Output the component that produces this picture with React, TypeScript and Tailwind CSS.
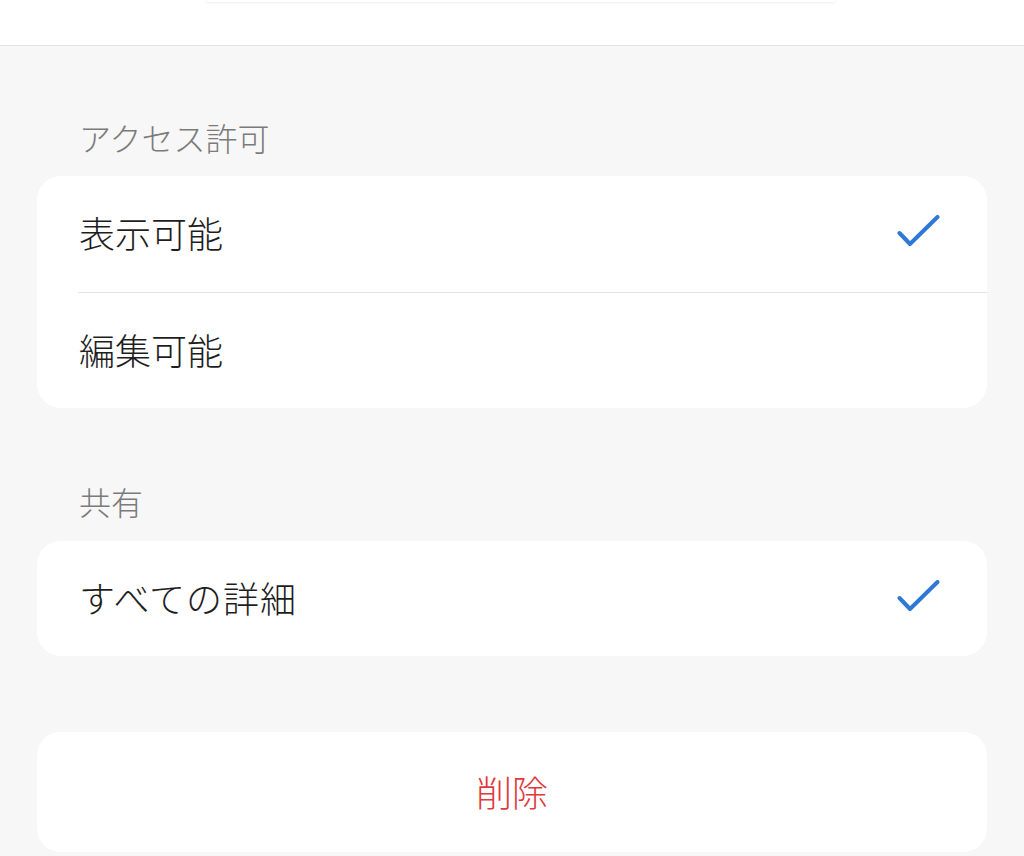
import React from "react";

const font = { fontFamily: '"Noto Sans CJK JP", "Noto Sans", sans-serif' };

function Check() {
  return (
    <svg width="48" height="40" viewBox="0 0 48 40" className="shrink-0">
      <path
        d="M4.5 18 L15 29 L42.5 2"
        fill="none"
        stroke="#2f79d6"
        strokeWidth="4"
        strokeLinecap="round"
        strokeLinejoin="round"
      />
    </svg>
  );
}

export default function App() {
  return (
    <div
      className="w-[1024px] h-[856px] overflow-hidden bg-[#f7f7f7] flex flex-col"
      style={font}
    >
      <div className="h-[46px] shrink-0 bg-white border-b border-[#e2e2e2] flex">
        <div className="ml-[206px] w-[630px] h-[3px] -mt-[1px] bg-white rounded-b-[6px] shadow-[0_1px_3px_rgba(0,0,0,0.08)]" />
      </div>

      <div className="flex flex-col px-[37px]">
        <div className="mt-[71px] h-[40px] flex items-center pl-[42px] text-[32px] font-light text-[#7b7b7b] leading-none">
          アクセス許可
        </div>
        <div className="mt-[19px] bg-white rounded-[24px] flex flex-col">
          <div className="h-[116px] flex items-center justify-between pl-[42px] pr-[44px]">
            <span className="text-[36px] font-light text-[#1e1e1e] leading-none mb-[4px]">表示可能</span>
            <div className="mt-[2px]">
              <Check />
            </div>
          </div>
          <div className="ml-[41px] h-[1px] bg-[#e4e4e4]" />
          <div className="h-[115px] flex items-center pl-[42px]">
            <span className="text-[36px] font-light text-[#1e1e1e] leading-none mb-[4px]">編集可能</span>
          </div>
        </div>

        <div className="mt-[73px] h-[40px] flex items-center pl-[42px] text-[32px] font-light text-[#7b7b7b] leading-none">
          共有
        </div>
        <div className="mt-[20px] bg-white rounded-[24px] h-[115px] flex items-center justify-between pl-[42px] pr-[44px]">
          <span className="text-[36px] font-light text-[#1e1e1e] leading-none mb-[4px] tracking-[1px]">すべての詳細</span>
          <div className="mt-[2px]">
            <Check />
          </div>
        </div>

        <div className="mt-[76px] bg-white rounded-[24px] h-[120px] flex items-center justify-center">
          <span className="text-[36px] font-light text-[#e0393b] leading-none mb-[3px]">削除</span>
        </div>
      </div>
    </div>
  );
}
